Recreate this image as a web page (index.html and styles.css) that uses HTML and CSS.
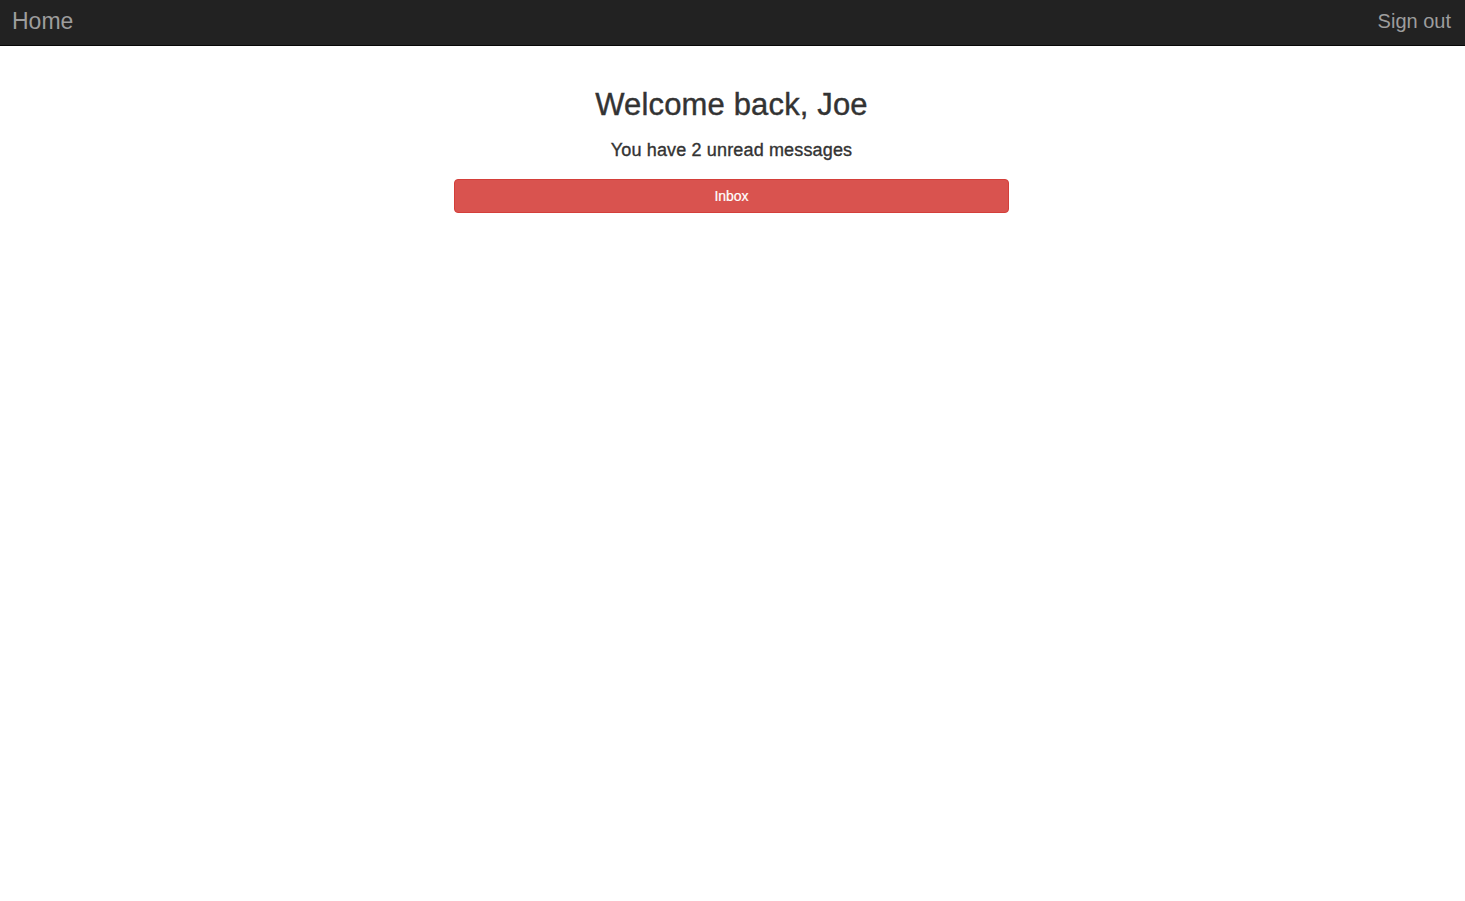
FILE: index.html
```html
<!DOCTYPE html>
<html lang="en">
<head>
<meta charset="utf-8">
<title>Home</title>
<link rel="stylesheet" href="styles.css">
</head>
<body>
<nav class="navbar">
  <a class="brand" href="#">Home</a>
  <a class="signout" href="#">Sign out</a>
</nav>
<main class="container">
  <h2 class="title">Welcome back, Joe</h2>
  <h4 class="subtitle">You have 2 unread messages</h4>
  <a class="btn-danger" href="#">Inbox</a>
</main>
</body>
</html>
```

FILE: styles.css
```css
* { box-sizing: border-box; }
html, body {
  margin: 0;
  padding: 0;
  background: #fff;
  font-family: "Liberation Sans", Arial, Helvetica, sans-serif;
  color: #333;
}
a { text-decoration: none; }

.navbar {
  display: flex;
  justify-content: space-between;
  align-items: flex-start;
  height: 46px;
  background: #222;
  border-bottom: 1px solid #080808;
  padding: 0 14px 0 12px;
}
.brand {
  color: #9d9d9d;
  font-size: 23px;
  line-height: 23px;
  padding-top: 10px;
}
.signout {
  color: #9d9d9d;
  font-size: 20px;
  line-height: 20px;
  padding-top: 11px;
}

.container {
  width: 557px;
  padding-right: 2px;
  margin: 0 auto;
  display: flex;
  flex-direction: column;
  align-items: stretch;
  text-align: center;
}
.title {
  margin: 42px 0 0;
  font-size: 31px;
  font-weight: 500;
  line-height: 34px;
  letter-spacing: 0.15px;
  -webkit-text-stroke: 0.4px #333;
}
.subtitle {
  margin: 18px 0 0;
  font-size: 18px;
  font-weight: 500;
  line-height: 20px;
  letter-spacing: 0.15px;
  -webkit-text-stroke: 0.35px #333;
}
.btn-danger {
  display: block;
  margin-top: 19px;
  height: 34px;
  padding: 6px 12px;
  font-size: 14px;
  line-height: 20px;
  color: #fff;
  background: #d9534f;
  border: 1px solid #d43f3a;
  border-radius: 4px;
  text-align: center;
  -webkit-text-stroke: 0.2px #fff;
}
```
